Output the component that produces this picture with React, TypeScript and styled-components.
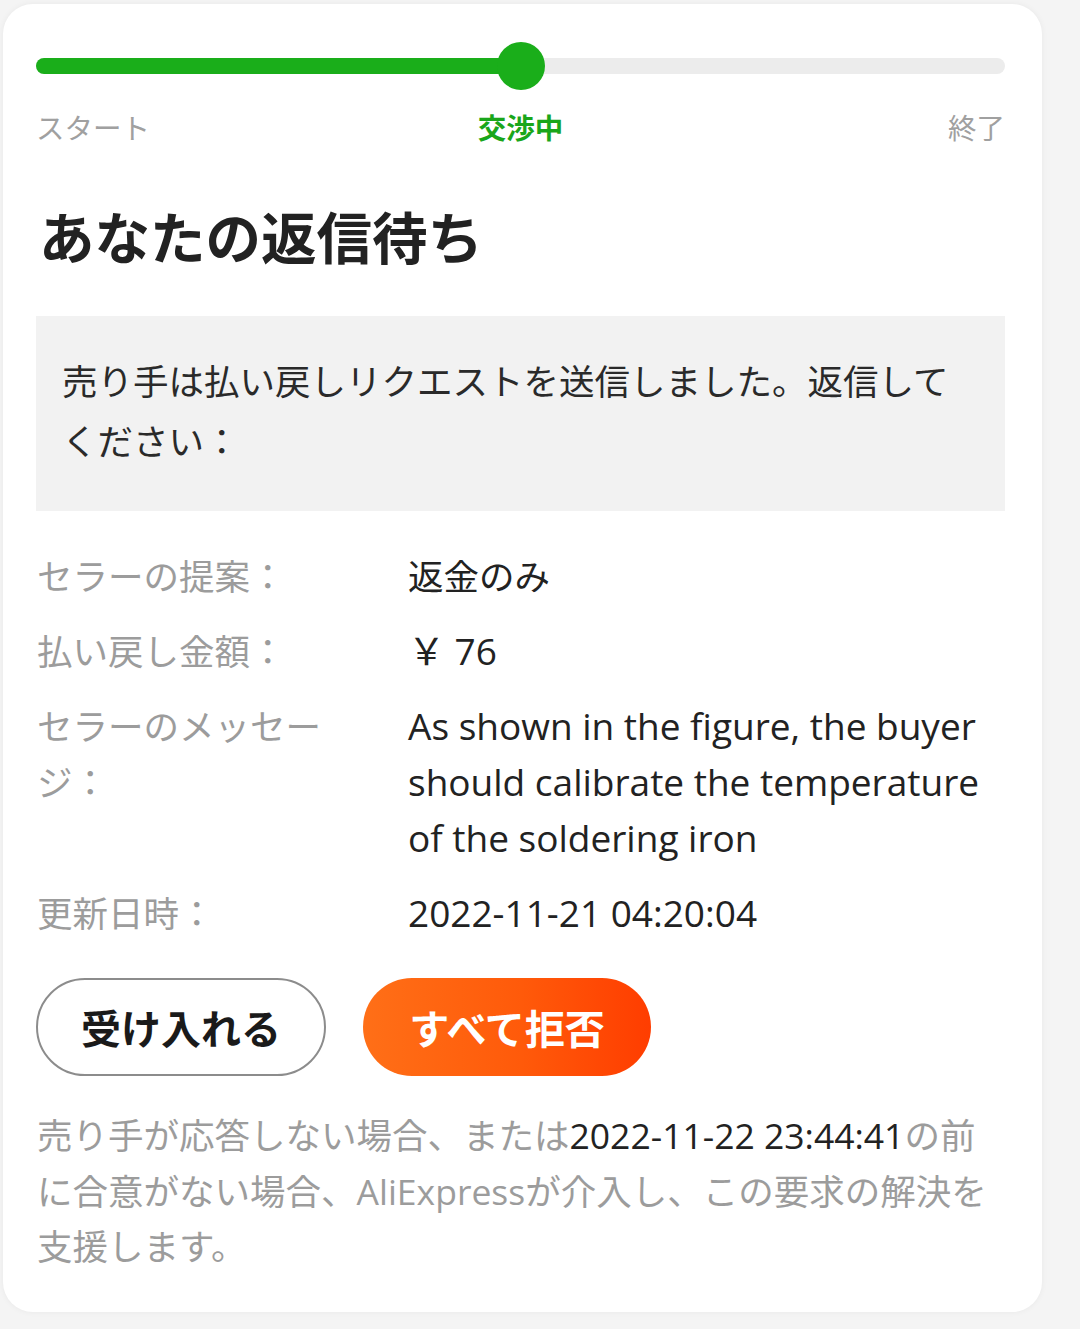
import React from "react";
import styled, { createGlobalStyle } from "styled-components";

const GlobalStyle = createGlobalStyle`
  html, body {
    margin: 0;
    padding: 0;
    background: #f4f4f4;
  }
  body {
    font-family: "Open Sans", "Noto Sans CJK JP", sans-serif;
    -webkit-font-smoothing: antialiased;
  }
`;

const Page = styled.div`
  padding: 4px 38px 17px 3px;
  min-height: 1329px;
  box-sizing: border-box;
`;

const Card = styled.div`
  background: #ffffff;
  border-radius: 30px;
  padding: 38px 37px 37px 33px;
  box-shadow: 0 0 6px rgba(0, 0, 0, 0.05);
`;

const ProgressWrap = styled.div`
  height: 48px;
  display: flex;
  align-items: center;
`;

const Bar = styled.div`
  flex: 1;
  height: 16px;
  border-radius: 8px;
  background: #ececec;
  position: relative;
`;

const Fill = styled.div`
  height: 100%;
  border-radius: 8px;
  background: #1aae1a;
`;

const Knob = styled.div`
  position: absolute;
  top: 50%;
  width: 48px;
  height: 48px;
  border-radius: 50%;
  background: #1aae1a;
  transform: translate(-50%, -50%);
`;

const StepLabels = styled.div`
  display: grid;
  grid-template-columns: 1fr auto 1fr;
  margin-top: 17px;
  font-family: "Noto Sans CJK JP", sans-serif;
  font-size: 28.5px;
  line-height: 40px;
`;

const StepLabel = styled.span<{ $align: "start" | "center" | "end"; $active?: boolean }>`
  justify-self: ${(p) => p.$align};
  color: ${(p) => (p.$active ? "#1aa61a" : "#a0a0a0")};
  font-weight: ${(p) => (p.$active ? 700 : 400)};
`;

const Title = styled.h1`
  margin: 53px 0 0 3px;
  font-family: "Noto Sans CJK JP", sans-serif;
  font-size: 55.5px;
  line-height: 70px;
  font-weight: 700;
  color: #222;
`;

const Notice = styled.div`
  margin-top: 46px;
  background: #f2f2f2;
  padding: 35px 30px 40px 26px;
  font-size: 35.5px;
  line-height: 60px;
  color: #2a2a2a;
`;

const Details = styled.div`
  margin-top: 37px;
  display: flex;
  flex-direction: column;
  gap: 19px;
`;

const Row = styled.div`
  display: grid;
  grid-template-columns: 300px 1fr;
  column-gap: 72px;
  font-size: 35.5px;
  line-height: 56px;
`;

const Label = styled.div`
  color: #9c9c9c;
  padding-left: 1px;
`;

const Value = styled.div<{ $latin?: boolean }>`
  color: #222;
  font-size: ${(p) => (p.$latin ? "37px" : "35.5px")};
`;

const Actions = styled.div`
  margin-top: 37px;
  display: flex;
  gap: 37px;
`;

const Button = styled.button<{ $primary?: boolean }>`
  height: 98px;
  padding: 0;
  border-radius: 49px;
  font-family: "Noto Sans CJK JP", sans-serif;
  font-size: 40px;
  font-weight: 700;
  cursor: pointer;
  box-sizing: border-box;
  border: ${(p) => (p.$primary ? "none" : "2px solid #8c8c8c")};
  background: ${(p) =>
    p.$primary ? "linear-gradient(90deg, #ff6f17 0%, #ff5a0a 55%, #ff3d00 100%)" : "#fff"};
  color: ${(p) => (p.$primary ? "#fff" : "#1a1a1a")};
  width: ${(p) => (p.$primary ? "288px" : "290px")};
`;

const Footer = styled.p`
  margin: 32px 0 0 1px;
  font-size: 35.5px;
  line-height: 55.5px;
  color: #9c9c9c;
`;

const Strong = styled.span`
  color: #222;
`;

export default function App() {
  const progress = 50;
  return (
    <>
      <GlobalStyle />
      <Page>
        <Card>
          <ProgressWrap>
            <Bar>
              <Fill style={{ width: `${progress}%` }} />
              <Knob style={{ left: `${progress}%` }} />
            </Bar>
          </ProgressWrap>
          <StepLabels>
            <StepLabel $align="start">スタート</StepLabel>
            <StepLabel $align="center" $active>
              交渉中
            </StepLabel>
            <StepLabel $align="end">終了</StepLabel>
          </StepLabels>

          <Title>あなたの返信待ち</Title>

          <Notice>売り手は払い戻しリクエストを送信しました。返信してください：</Notice>

          <Details>
            <Row>
              <Label>セラーの提案：</Label>
              <Value>返金のみ</Value>
            </Row>
            <Row>
              <Label>払い戻し金額：</Label>
              <Value $latin>￥ 76</Value>
            </Row>
            <Row>
              <Label>セラーのメッセージ：</Label>
              <Value $latin>
                As shown in the figure, the buyer should calibrate the temperature of the soldering iron
              </Value>
            </Row>
            <Row>
              <Label>更新日時：</Label>
              <Value $latin>2022-11-21 04:20:04</Value>
            </Row>
          </Details>

          <Actions>
            <Button>受け入れる</Button>
            <Button $primary>すべて拒否</Button>
          </Actions>

          <Footer>
            売り手が応答しない場合、または<Strong>2022-11-22 23:44:41</Strong>
            の前に合意がない場合、AliExpressが介入し、この要求の解決を支援します。
          </Footer>
        </Card>
      </Page>
    </>
  );
}
